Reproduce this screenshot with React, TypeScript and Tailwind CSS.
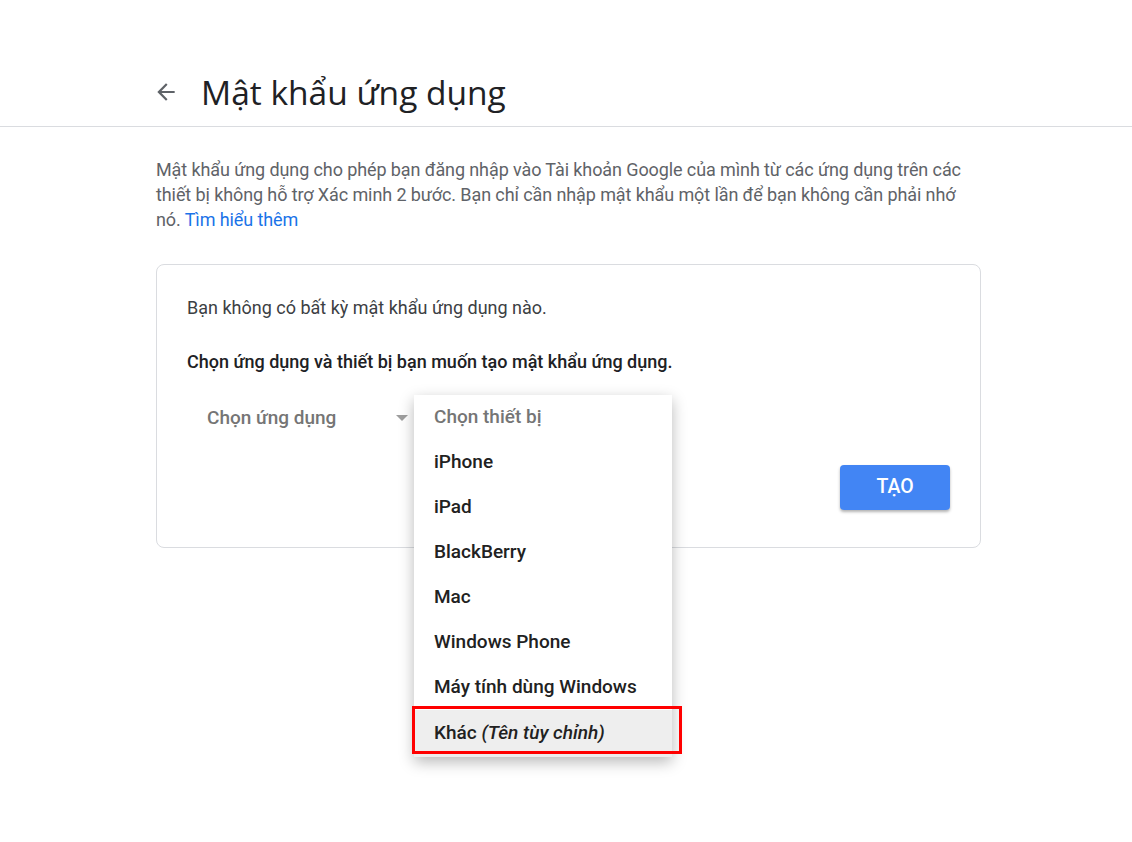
import React from "react";

const devices = ["iPhone", "iPad", "BlackBerry", "Mac", "Windows Phone", "Máy tính dùng Windows"];

const App = () => {
  return (
    <div className="min-h-[842px] bg-white font-['Roboto',sans-serif] text-[#202124]">
      <header className="border-b border-[#dadce0] pt-[70px] pb-[12px]">
        <div className="flex items-center pl-[153px]">
          <svg width="26" height="26" viewBox="0 0 24 24" className="text-[#5f6368]">
            <path d="M20 11H7.83l5.59-5.59L12 4l-8 8 8 8 1.41-1.41L7.83 13H20v-2z" fill="currentColor" />
          </svg>
          <h1 className="ml-[22px] font-['Open_Sans',sans-serif] text-[33.5px] leading-[44px] text-[#202124]">
            Mật khẩu ứng dụng
          </h1>
        </div>
      </header>

      <main className="pl-[156px] pr-[151px] pt-[30px]">
        <p className="w-[825px] text-[18px] leading-[25px] tracking-[-0.1px] text-[#5f6368]">
          Mật khẩu ứng dụng cho phép bạn đăng nhập vào Tài khoản Google của mình từ các ứng dụng trên các thiết bị
          không hỗ trợ Xác minh 2 bước. Bạn chỉ cần nhập mật khẩu một lần để bạn không cần phải nhớ nó.{" "}
          <span className="text-[#1a73e8]">Tìm hiểu thêm</span>
        </p>

        <section className="relative mt-[32px] h-[284px] w-[825px] rounded-[8px] border border-[#dadce0] px-[30px] pt-[31px]">
          <p className="text-[18px] leading-[24px] text-[#3c4043]">Bạn không có bất kỳ mật khẩu ứng dụng nào.</p>
          <p className="mt-[30px] text-[18px] font-medium leading-[24px] text-[#202124]">
            Chọn ứng dụng và thiết bị bạn muốn tạo mật khẩu ứng dụng.
          </p>

          <div className="mt-[30px] flex items-center">
            <div className="flex w-[227px] items-center justify-between pl-[20px] pr-[6px]">
              <span className="text-[19px] font-medium text-[#757575]">Chọn ứng dụng</span>
              <svg width="12" height="6" viewBox="0 0 12 6">
                <path d="M0 0h12L6 6z" fill="#9e9e9e" />
              </svg>
            </div>
          </div>

          <div className="mt-[32px] flex justify-end">
            <button className="h-[45px] w-[110px] rounded-[4px] bg-[#4285f4] text-[19.5px] font-medium text-white shadow-[0_2px_3px_rgba(0,0,0,0.3)]">
              TẠO
            </button>
          </div>

          <div className="absolute left-[257px] top-[130px] w-[258px] bg-white shadow-[0_5px_14px_rgba(0,0,0,0.28)]">
            <div className="flex h-[45px] items-center px-[20px] text-[19px] font-medium text-[#757575]">
              Chọn thiết bị
            </div>
            {devices.map((d) => (
              <div key={d} className="flex h-[45px] items-center px-[20px] text-[19px] font-medium text-[#212121]">
                {d}
              </div>
            ))}
            <div className="flex h-[47px] items-center bg-[#eeeeee] px-[20px] text-[19px] font-medium text-[#212121]">
              Khác&nbsp;<i>(Tên tùy chỉnh)</i>
            </div>
            <div className="absolute left-[-2px] top-[311px] h-[48px] w-[270px] border-[3px] border-[#ff0000]" />
          </div>
        </section>
      </main>
    </div>
  );
};

export default App;
